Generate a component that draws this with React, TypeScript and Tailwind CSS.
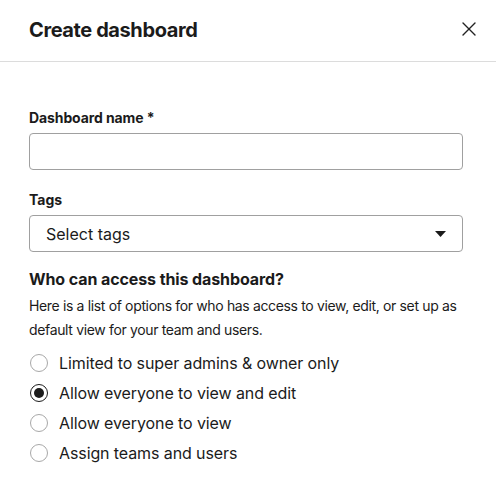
import { X } from 'lucide-react'

const options = [
  'Limited to super admins & owner only',
  'Allow everyone to view and edit',
  'Allow everyone to view',
  'Assign teams and users',
]

export default function App() {
  const selected = 1
  return (
    <div
      className="w-[496px] h-[483px] bg-white text-[#1b1b1b] overflow-hidden"
      style={{ fontFamily: 'Inter, "Noto Sans", sans-serif' }}
    >
      {/* Header */}
      <div className="flex items-center justify-between h-[62px] pl-[29px] pr-[11px] border-b border-[#dcdcdc]">
        <h1 className="text-[20px] font-bold tracking-[-0.4px] -mt-[2px]">Create dashboard</h1>
        <button className="p-1 text-[#222] -mt-[4px]">
          <X size={24} strokeWidth={1.4} />
        </button>
      </div>

      <div className="pl-[29px] pr-[33px] pt-[47px]">
        {/* Name */}
        <label className="block text-[14px] font-bold leading-[18px] tracking-[-0.1px]">Dashboard name *</label>
        <input
          type="text"
          className="mt-[6px] block w-full h-[37px] rounded-[4px] border border-[#a0a0a0] px-3 outline-none"
        />

        {/* Tags */}
        <label className="block mt-[21px] text-[14px] font-bold leading-[18px]">Tags</label>
        <div className="mt-[6px] flex items-center justify-between h-[37px] rounded-[4px] border border-[#a0a0a0] pl-[16px] pr-[16px]">
          <span className="text-[16px]">Select tags</span>
          <svg width="11" height="6" viewBox="0 0 11 6">
            <path d="M0 0h11L5.5 6z" fill="#1b1b1b" />
          </svg>
        </div>

        {/* Access */}
        <h2 className="mt-[17px] text-[16px] font-bold leading-[20px] tracking-[-0.1px]">Who can access this dashboard?</h2>
        <p className="mt-[5px] text-[14px] leading-[24px] tracking-[-0.35px]">
          Here is a list of options for who has access to view, edit, or set up as default view for your team and users.
        </p>

        <div className="mt-[6px] flex flex-col">
          {options.map((o, i) => (
            <label key={o} className="flex items-center h-[30px] gap-[11px] text-[16px] tracking-[-0.1px]">
              <span
                className={
                  i === selected
                    ? 'flex items-center justify-center w-[18px] h-[18px] ml-[1px] rounded-full border-[1.5px] border-[#1b1b1b]'
                    : 'flex items-center justify-center w-[18px] h-[18px] ml-[1px] rounded-full border border-[#a8a8a8]'
                }
              >
                {i === selected && <span className="w-[10px] h-[10px] rounded-full bg-[#1b1b1b]" />}
              </span>
              {o}
            </label>
          ))}
        </div>
      </div>
    </div>
  )
}
